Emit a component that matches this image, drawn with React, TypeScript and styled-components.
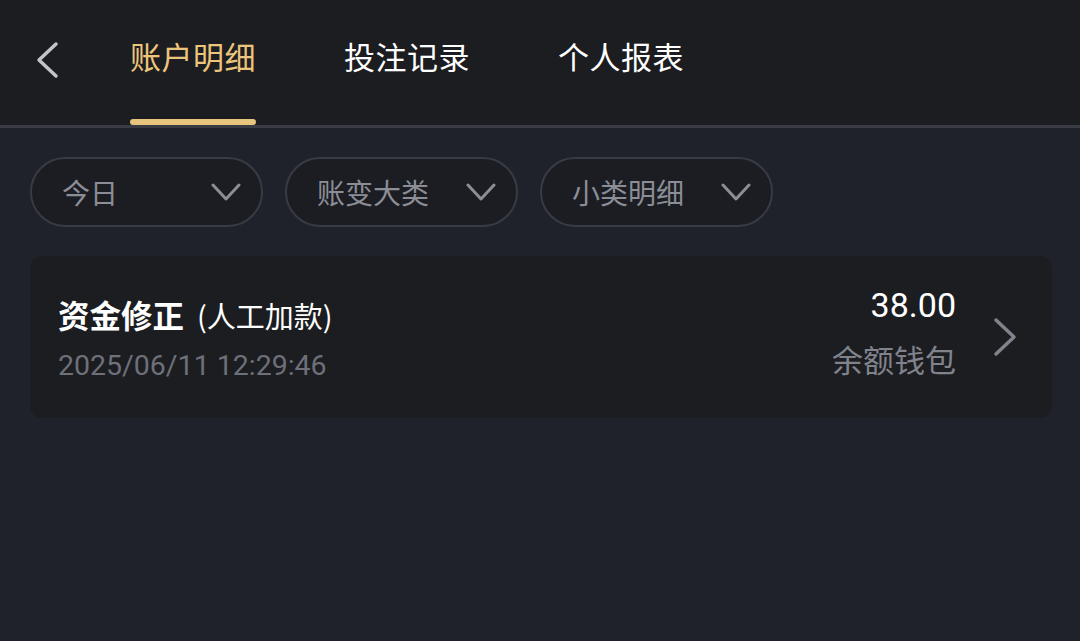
import React from 'react';
import styled, { createGlobalStyle } from 'styled-components';

const GlobalStyle = createGlobalStyle`
  html, body {
    margin: 0;
    padding: 0;
    background: #1f222b;
  }
  body {
    font-family: Roboto, "Noto Sans CJK SC", sans-serif;
  }
`;

const Page = styled.div`
  width: 1080px;
  height: 641px;
  background: #1f222b;
  overflow: hidden;
`;

const Header = styled.div`
  height: 125px;
  background: #1c1d21;
  border-bottom: 3px solid #3a3c45;
  display: flex;
  align-items: flex-start;
  box-sizing: content-box;
`;

const BackButton = styled.div`
  width: 130px;
  height: 119px;
  display: flex;
  align-items: center;
  padding-left: 34px;
  box-sizing: border-box;
`;

const Tabs = styled.div`
  display: flex;
  gap: 88px;
`;

const Tab = styled.div<{ $active?: boolean }>`
  height: 125px;
  box-sizing: border-box;
  padding-top: 37px;
  font-size: 31px;
  line-height: 44px;
  color: ${(p) => (p.$active ? '#ecc57c' : '#ffffff')};
  position: relative;
  letter-spacing: 0.5px;

  &::after {
    content: '';
    display: ${(p) => (p.$active ? 'block' : 'none')};
    position: absolute;
    left: 0;
    right: 0;
    bottom: 0;
    height: 6px;
    border-radius: 3px;
    background: #e8c57c;
  }
`;

const Filters = styled.div`
  display: flex;
  gap: 22px;
  padding: 29px 30px 0;
`;

const Pill = styled.div`
  width: 233px;
  height: 70px;
  box-sizing: border-box;
  border: 2px solid #383b44;
  border-radius: 35px;
  background: #1c1d22;
  display: flex;
  align-items: center;
  justify-content: space-between;
  padding: 0 20px 0 30px;
  color: #8b8e97;
  font-size: 28px;
`;

const Card = styled.div`
  margin: 29px 28px 0 30px;
  height: 162px;
  border-radius: 12px;
  background: #1c1d21;
  display: flex;
  align-items: center;
  padding: 0 34px 0 28px;
`;

const Left = styled.div`
  flex: 1;
  display: flex;
  flex-direction: column;
  gap: 12px;
  margin-top: 2px;
`;

const Title = styled.div`
  font-size: 31.5px;
  line-height: 42px;
  color: #ffffff;
  font-family: "Noto Sans CJK SC", sans-serif;
`;

const TitleMain = styled.span`
  font-weight: 700;
`;

const TitleSub = styled.span`
  font-weight: 400;
  font-size: 29px;
  margin-left: 13px;
`;

const DateText = styled.div`
  font-size: 28.5px;
  line-height: 36px;
  color: #6d7079;
  font-family: Roboto, sans-serif;
`;

const Right = styled.div`
  display: flex;
  flex-direction: column;
  align-items: flex-end;
  gap: 18px;
  margin-top: -6px;
`;

const Amount = styled.div`
  font-size: 34px;
  line-height: 38px;
  color: #ffffff;
  font-family: Roboto, sans-serif;
`;

const Wallet = styled.div`
  font-size: 31px;
  line-height: 40px;
  color: #80838c;
`;

const Arrow = styled.div`
  margin-left: 36px;
  display: flex;
  align-items: center;
`;

const ChevronDown = () => (
  <svg width="30" height="20" viewBox="0 0 30 20" fill="none">
    <path d="M2 3 L15 17 L28 3" stroke="#8b8e97" strokeWidth="3" strokeLinecap="round" strokeLinejoin="round" />
  </svg>
);

export default function App() {
  return (
    <Page>
      <GlobalStyle />
      <Header>
        <BackButton>
          <svg width="26" height="38" viewBox="0 0 26 38" fill="none">
            <path d="M22 3 L5 19 L22 35" stroke="#c2c4ca" strokeWidth="3.5" strokeLinecap="round" strokeLinejoin="round" />
          </svg>
        </BackButton>
        <Tabs>
          <Tab $active>账户明细</Tab>
          <Tab>投注记录</Tab>
          <Tab>个人报表</Tab>
        </Tabs>
      </Header>
      <Filters>
        <Pill>
          今日
          <ChevronDown />
        </Pill>
        <Pill>
          账变大类
          <ChevronDown />
        </Pill>
        <Pill>
          小类明细
          <ChevronDown />
        </Pill>
      </Filters>
      <Card>
        <Left>
          <Title>
            <TitleMain>资金修正</TitleMain>
            <TitleSub>(人工加款)</TitleSub>
          </Title>
          <DateText>2025/06/11 12:29:46</DateText>
        </Left>
        <Right>
          <Amount>38.00</Amount>
          <Wallet>余额钱包</Wallet>
        </Right>
        <Arrow>
          <svg width="26" height="40" viewBox="0 0 26 40" fill="none">
            <path d="M4 3 L22 20 L4 37" stroke="#80838c" strokeWidth="3.5" strokeLinecap="round" strokeLinejoin="round" />
          </svg>
        </Arrow>
      </Card>
    </Page>
  );
}
